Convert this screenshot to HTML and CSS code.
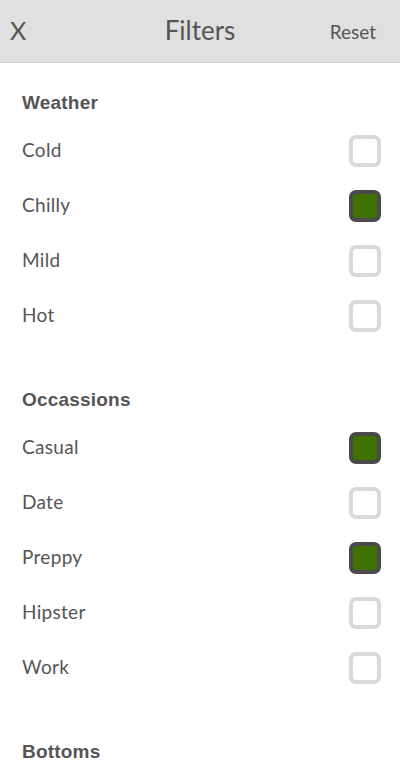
FILE: index.html
```html
<!DOCTYPE html>
<html lang="en">
<head>
    <meta charset="UTF-8">
    <meta name="viewport" content="width=device-width, initial-scale=1.0">
    <title>Filters</title>
    <link rel="stylesheet" href="styles.css">
</head>
<body>
    <div class="header">
        <span class="close">X</span>
        <span class="title">Filters</span>
        <span class="reset">Reset</span>
    </div>
    <div class="section">
        <div class="section-title">Weather</div>
        <div class="row"><span>Cold</span><span class="box"></span></div>
        <div class="row"><span>Chilly</span><span class="box checked"></span></div>
        <div class="row"><span>Mild</span><span class="box"></span></div>
        <div class="row"><span>Hot</span><span class="box"></span></div>
    </div>
    <div class="section">
        <div class="section-title">Occassions</div>
        <div class="row"><span>Casual</span><span class="box checked"></span></div>
        <div class="row"><span>Date</span><span class="box"></span></div>
        <div class="row"><span>Preppy</span><span class="box checked"></span></div>
        <div class="row"><span>Hipster</span><span class="box"></span></div>
        <div class="row"><span>Work</span><span class="box"></span></div>
    </div>
    <div class="section">
        <div class="section-title">Bottoms</div>
    </div>
</body>
</html>
```

FILE: styles.css
```css
body {
    font-family: "Lato", "Liberation Sans", sans-serif;
    margin: 0;
    padding: 0;
    background: white;
    color: #555;
    height: 777px;
    overflow: hidden;
}
.header {
    height: 62px;
    background: #e0e0e0;
    border-bottom: 1px solid #cfcfcf;
    display: flex;
    align-items: center;
    justify-content: space-between;
    padding: 0 24px 0 10px;
}
.close {
    font-size: 25px;
    width: 60px;
    margin-top: -2px;
}
.title {
    font-size: 26px;
    margin-top: -2px;
    margin-left: 14px;
}
.reset {
    font-size: 19px;
    width: 60px;
    text-align: right;
}
.section {
    padding: 18px 19px 17px 22px;
}
.section-title {
    height: 42px;
    line-height: 44px;
    font-family: "Liberation Sans", sans-serif;
    font-size: 19px;
    font-weight: bold;
    letter-spacing: 0.2px;
}
.row {
    height: 55px;
    display: flex;
    align-items: center;
    justify-content: space-between;
    font-size: 19px;
    letter-spacing: 0.3px;
}
.row span:first-child {
    margin-top: -3px;
}
.box {
    width: 24px;
    height: 24px;
    border: 4px solid #d9d9d9;
    border-radius: 7px;
}
.box.checked {
    border-color: #4a4a4a;
    background: #3f7200;
}
```
